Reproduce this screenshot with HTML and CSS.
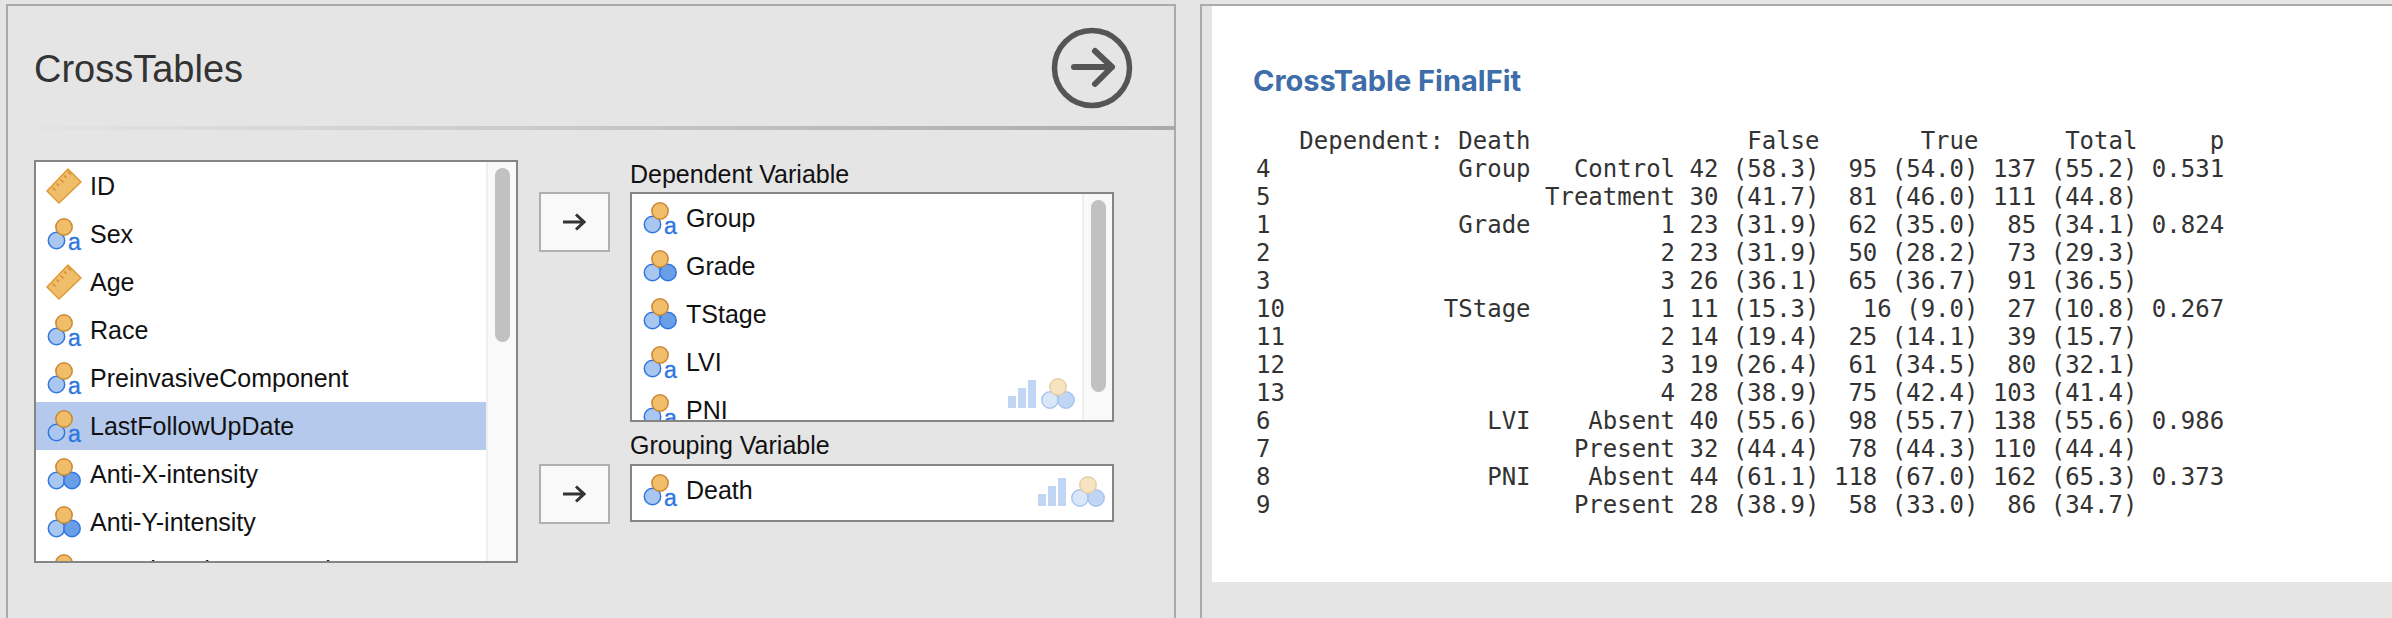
FILE: index.html
```
<!DOCTYPE html>
<html lang="en">
<head>
<meta charset="utf-8">
<title>CrossTables</title>
<link rel="stylesheet" href="styles.css">
</head>
<body>
<svg class="defs" width="0" height="0" aria-hidden="true">
  <symbol id="scale" viewBox="0 0 36 36">
    <polygon points="22,1 35,14 13,35 1,23" fill="#f0bd6b" stroke="#e29a34" stroke-width="1.5" stroke-linejoin="round"/>
    <path d="M5.500 18.500l3 3M9.500 14.500l2.500 2.500M13.500 10.500l3 3M17 6.500l2.500 2.500M21 2.500l3 3" stroke="#d08c2e" stroke-width="1.2" fill="none" transform="translate(1 1)"/>
  </symbol>
  <symbol id="nom" viewBox="0 0 36 36">
    <circle cx="10.500" cy="24.500" r="8.200" fill="#a9c7f0" stroke="#2f77e0" stroke-width="1.500"/>
    <circle cx="18" cy="11" r="8.200" fill="#f0bd6b" stroke="#c9892f" stroke-width="1.500"/>
  </symbol>
  <symbol id="ord" viewBox="0 0 36 36">
    <circle cx="10.500" cy="24.500" r="8.200" fill="#a9c7f0" stroke="#2f77e0" stroke-width="1.500"/>
    <circle cx="26" cy="24.500" r="8.200" fill="#6a9ee6" stroke="#2f77e0" stroke-width="1.500"/>
    <circle cx="18" cy="11" r="8.200" fill="#f0bd6b" stroke="#c9892f" stroke-width="1.500"/>
  </symbol>
  <symbol id="allowed" viewBox="0 0 72 36">
    <g opacity="0.42">
      <rect x="2" y="20" width="8" height="12" fill="#6a9ee6"/>
      <rect x="12" y="12" width="8" height="20" fill="#6a9ee6"/>
      <rect x="22" y="4" width="8" height="28" fill="#6a9ee6"/>
      <circle cx="44" cy="24" r="8.200" fill="#a9c7f0" stroke="#2f77e0" stroke-width="1.500"/>
      <circle cx="60" cy="24" r="8.200" fill="#6a9ee6" stroke="#2f77e0" stroke-width="1.500"/>
      <circle cx="52" cy="11" r="8.200" fill="#f0bd6b" stroke="#c9892f" stroke-width="1.500"/>
    </g>
  </symbol>
</svg>

<main class="app">
  <section class="options">
    <header class="options-head">
      <h1 class="options-title">CrossTables</h1>
      <svg class="go" width="84" height="84" viewBox="0 0 84 84">
        <circle cx="42" cy="42" r="37.500" fill="none" stroke="#555" stroke-width="5.500"/>
        <path d="M24 41H62M45 25L62 41L45 58" fill="none" stroke="#555" stroke-width="6" stroke-linecap="round" stroke-linejoin="round"/>
      </svg>
    </header>
    <div class="rule"></div>
    <div class="options-body">
      <div class="varlist source">
        <div class="rows">
          <div class="row"><i class="ico"><svg class="ico-svg"><use href="#scale"/></svg></i><span>ID</span></div>
          <div class="row"><i class="ico"><svg class="ico-svg"><use href="#nom"/></svg><b class="ico-a">a</b></i><span>Sex</span></div>
          <div class="row"><i class="ico"><svg class="ico-svg"><use href="#scale"/></svg></i><span>Age</span></div>
          <div class="row"><i class="ico"><svg class="ico-svg"><use href="#nom"/></svg><b class="ico-a">a</b></i><span>Race</span></div>
          <div class="row"><i class="ico"><svg class="ico-svg"><use href="#nom"/></svg><b class="ico-a">a</b></i><span>PreinvasiveComponent</span></div>
          <div class="row selected"><i class="ico"><svg class="ico-svg"><use href="#nom"/></svg><b class="ico-a">a</b></i><span>LastFollowUpDate</span></div>
          <div class="row"><i class="ico"><svg class="ico-svg"><use href="#ord"/></svg></i><span>Anti-X-intensity</span></div>
          <div class="row"><i class="ico"><svg class="ico-svg"><use href="#ord"/></svg></i><span>Anti-Y-intensity</span></div>
          <div class="row"><i class="ico"><svg class="ico-svg"><use href="#nom"/></svg></i><span>LymphNodeMetastasis</span></div>
        </div>
        <div class="track"><div class="thumb thumb-source"></div></div>
      </div>
      <div class="targets">
        <div class="target-label first">Dependent Variable</div>
        <button class="move move-dependent" type="button"><svg width="24" height="18" viewBox="0 0 24 18"><path d="M1 9H22M14 1.500L22 9L14 16.500" fill="none" stroke="#333" stroke-width="3"/></svg></button>
        <div class="varlist dependent">
          <div class="rows">
            <div class="row"><i class="ico"><svg class="ico-svg"><use href="#nom"/></svg><b class="ico-a">a</b></i><span>Group</span></div>
            <div class="row"><i class="ico"><svg class="ico-svg"><use href="#ord"/></svg></i><span>Grade</span></div>
            <div class="row"><i class="ico"><svg class="ico-svg"><use href="#ord"/></svg></i><span>TStage</span></div>
            <div class="row"><i class="ico"><svg class="ico-svg"><use href="#nom"/></svg><b class="ico-a">a</b></i><span>LVI</span></div>
            <div class="row"><i class="ico"><svg class="ico-svg"><use href="#nom"/></svg><b class="ico-a">a</b></i><span>PNI</span></div>
          </div>
          <div class="track"><div class="thumb thumb-dependent"></div></div>
          <svg class="allowed allowed-dependent"><use href="#allowed"/></svg>
        </div>
        <div class="target-label second">Grouping Variable</div>
        <button class="move move-grouping" type="button"><svg width="24" height="18" viewBox="0 0 24 18"><path d="M1 9H22M14 1.500L22 9L14 16.500" fill="none" stroke="#333" stroke-width="3"/></svg></button>
        <div class="varlist grouping">
          <div class="rows">
            <div class="row"><i class="ico"><svg class="ico-svg"><use href="#nom"/></svg><b class="ico-a">a</b></i><span>Death</span></div>
          </div>
          <svg class="allowed allowed-grouping"><use href="#allowed"/></svg>
        </div>
      </div>
    </div>
  </section>

  <section class="results">
    <div class="results-sheet">
      <h2 class="results-title">CrossTable FinalFit</h2>
<pre class="results-table">   Dependent: Death               False       True      Total     p
4             Group   Control 42 (58.3)  95 (54.0) 137 (55.2) 0.531
5                   Treatment 30 (41.7)  81 (46.0) 111 (44.8)
1             Grade         1 23 (31.9)  62 (35.0)  85 (34.1) 0.824
2                           2 23 (31.9)  50 (28.2)  73 (29.3)
3                           3 26 (36.1)  65 (36.7)  91 (36.5)
10           TStage         1 11 (15.3)   16 (9.0)  27 (10.8) 0.267
11                          2 14 (19.4)  25 (14.1)  39 (15.7)
12                          3 19 (26.4)  61 (34.5)  80 (32.1)
13                          4 28 (38.9)  75 (42.4) 103 (41.4)
6               LVI    Absent 40 (55.6)  98 (55.7) 138 (55.6) 0.986
7                     Present 32 (44.4)  78 (44.3) 110 (44.4)
8               PNI    Absent 44 (61.1) 118 (67.0) 162 (65.3) 0.373
9                     Present 28 (38.9)  58 (33.0)  86 (34.7)</pre>
    </div>
  </section>
</main>
</body>
</html>
```
FILE: styles.css
```
* { box-sizing: border-box; }
html, body { margin: 0; height: 618px; overflow: hidden; background: #e5e5e5; }
body { font-family: "Liberation Sans", Arial, sans-serif; color: #111; }
.defs { position: absolute; }

.app { display: flex; height: 618px; padding: 4px 0 0 6px; gap: 24px; }

.options {
  width: 1170px;
  flex: none;
  border: 2px solid #aaa;
  border-bottom: 0;
}
.options-head {
  height: 120px;
  padding: 4px 40px 0 26px;
  display: flex;
  align-items: center;
  justify-content: space-between;
}
.options-title { margin: 0; padding-top: 2px; font-size: 38px; font-weight: 400; color: #333; }
.rule { height: 4px; background: linear-gradient(to right, #e5e5e5, #aaa); }

.options-body { display: flex; align-items: flex-start; padding: 30px 0 0 26px; gap: 21px; }

.varlist {
  position: relative;
  display: flex;
  border: 2px solid #858585;
  background: #fff;
  overflow: hidden;
}
.source { width: 484px; height: 403px; }

.rows { flex: 1; min-width: 0; }
.row {
  display: flex;
  align-items: center;
  height: 48px;
  padding-left: 10px;
  font-size: 25px;
  white-space: nowrap;
}
.row.selected { background: #b5c9ec; }
.row span { padding-top: 1px; }
.ico { position: relative; display: block; width: 36px; height: 36px; margin-right: 8px; flex: none; }
.ico-svg { display: block; width: 36px; height: 36px; }
.ico-a {
  position: absolute;
  left: 22px;
  top: 18px;
  font: 400 23px/16px "Liberation Sans", Arial, sans-serif;
  color: #2f77e0;
  -webkit-text-stroke: 0.4px #2f77e0;
}

.track {
  width: 30px;
  flex: none;
  padding: 6px 6px 0 7px;
  background: #f9f9f9;
  border-left: 2px solid #eee;
}
.thumb { border-radius: 8px; background: #c1c1c1; }
.thumb-source { height: 174px; }
.thumb-dependent { height: 192px; }

.allowed { position: absolute; width: 72px; height: 36px; }
.allowed-dependent { right: 34px; bottom: 8px; }
.allowed-grouping { right: 4px; bottom: 10px; }

.targets {
  display: grid;
  grid-template-columns: 71px 484px;
  grid-template-rows: 32px 230px 42px 60px;
  column-gap: 20px;
}
.target-label { grid-column: 2; font-size: 25px; line-height: 28px; white-space: nowrap; }
.target-label.first { grid-row: 1; }
.target-label.second { grid-row: 3; align-self: end; margin-bottom: 5px; }
.move {
  grid-column: 1;
  width: 71px;
  height: 60px;
  padding: 0 2px 0 0;
  display: flex;
  align-items: center;
  justify-content: center;
  background: #f9f9f9;
  border: 2px solid #b0b0b0;
}
.move-dependent { grid-row: 2; }
.move-grouping { grid-row: 4; }
.dependent { grid-column: 2; grid-row: 2; height: 230px; }
.grouping { grid-column: 2; grid-row: 4; height: 58px; align-self: start; }

.results {
  flex: 1;
  min-width: 0;
  border-top: 2px solid #aaa;
  border-left: 2px solid #aaa;
  padding-left: 10px;
}
.results-sheet {
  height: 576px;
  background: #fff;
  padding: 57px 0 0 44px;
}
.results-title {
  margin: 0 0 29px -3px;
  font: 700 29px Inter, "Liberation Sans", sans-serif;
  color: #3e6da9;
}
.results-table {
  margin: 0;
  font: 24px/28px "DejaVu Sans Mono", "Liberation Mono", monospace;
  color: #333;
}
```
